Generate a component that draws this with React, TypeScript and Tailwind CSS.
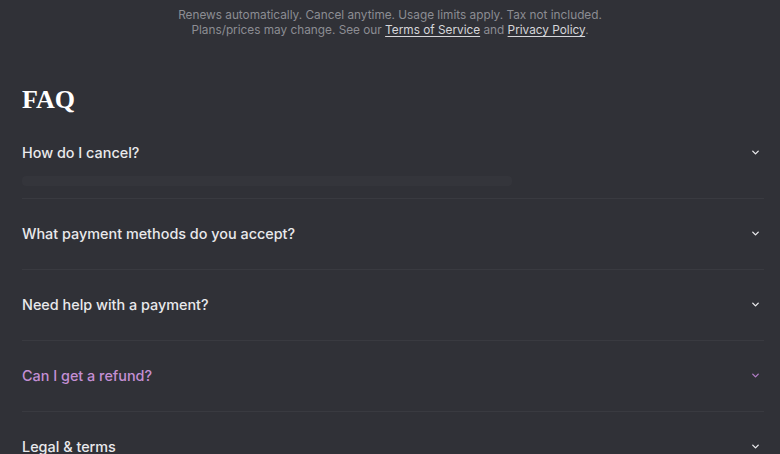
import { ChevronDown } from "lucide-react";

const questions = [
  { q: "What payment methods do you accept?" },
  { q: "Need help with a payment?" },
  { q: "Can I get a refund?", active: true },
  { q: "Legal & terms" },
];

const App = () => {
  return (
    <div className="min-h-screen bg-[#303137] font-['Inter','Liberation_Sans',sans-serif] text-[#e9e9ec]">
      <div className="pt-[8px] text-center text-[11.8px] leading-[15px] text-[#8c8d93]">
        <p>Renews automatically. Cancel anytime. Usage limits apply. Tax not included.</p>
        <p>
          Plans/prices may change. See our{" "}
          <span className="text-[#d6d6da] underline underline-offset-2">Terms of Service</span> and{" "}
          <span className="text-[#d6d6da] underline underline-offset-2">Privacy Policy</span>.
        </p>
      </div>

      <div className="px-[22px] pr-[16px]">
        <h2 className="mt-[46px] font-['Liberation_Serif','DejaVu_Serif',serif] text-[26px] font-bold leading-[32px] text-white">
          FAQ
        </h2>

        <div className="mt-[14px]">
          <div className="pb-[12px]">
            <div className="flex items-center justify-between py-[12px]">
              <span className="text-[14.4px] font-medium">How do I cancel?</span>
              <ChevronDown className="mr-[3px] h-[11px] w-[11px]" strokeWidth={3} />
            </div>
            <div className="h-[10px] w-[490px] rounded bg-[#34353b]" />
          </div>

          {questions.map((item) => (
            <div key={item.q} className="border-t border-[#393a40]">
              <div className="flex items-center justify-between py-[26px]">
                <span
                  className={
                    item.active
                      ? "text-[14.4px] font-medium leading-[18px] text-[#c48fd4]"
                      : "text-[14.4px] font-medium leading-[18px]"
                  }
                >
                  {item.q}
                </span>
                <ChevronDown
                  className={item.active ? "mr-[3px] h-[11px] w-[11px] text-[#b07cc4]" : "mr-[3px] h-[11px] w-[11px]"}
                  strokeWidth={3}
                />
              </div>
            </div>
          ))}
        </div>
      </div>
    </div>
  );
};

export default App;
